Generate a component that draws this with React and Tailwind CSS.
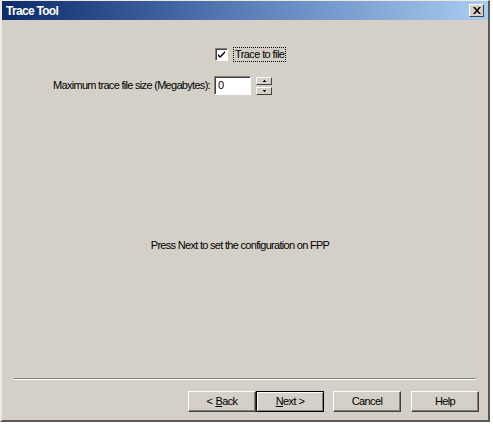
import React from "react";

const font = { fontFamily: '"Liberation Sans", Arial, sans-serif' };

const DlgButton = ({ children, isDefault = false, className = "" }) => (
  <button
    className={
      "h-[21px] w-[68px] bg-[#d4d0c8] text-[11px] text-black flex items-center justify-center " +
      (isDefault
        ? "border border-black shadow-[inset_1px_1px_0_#fff,inset_-1px_-1px_0_#808080] "
        : "border border-t-white border-l-white border-r-[#404040] border-b-[#404040] shadow-[inset_-1px_-1px_0_#808080] ") +
      className
    }
  >
    {children}
  </button>
);

export default function App() {
  return (
    <div className="w-[493px] h-[428px] bg-white tracking-[-0.6px]" style={font}>
      <div className="w-[490px] h-[422px] bg-[#d4d0c8] flex flex-col border-l-2 border-t border-l-[#ece9e2] border-t-[#ece9e2] border-r-2 border-b-2 border-r-[#5a5a5a] border-b-[#5a5a5a]">
        {/* title bar */}
        <div className="h-[19px] flex items-center justify-between pl-[4px] pr-[4px] bg-gradient-to-r from-[#0c2a6b] via-[#5a7fb8] to-[#a9cdf1]">
          <span className="text-white font-bold text-[12px] tracking-[-0.7px]">Trace Tool</span>
          <div className="w-[15px] h-[13px] bg-[#d4d0c8] border border-t-white border-l-white border-r-[#404040] border-b-[#404040] flex items-center justify-center">
            <svg width="8" height="7" viewBox="0 0 8 7">
              <path d="M0 0h2l2 2.5L6 0h2L5 3.5 8 7H6L4 4.5 2 7H0l3-3.5z" fill="#000" />
            </svg>
          </div>
        </div>

        {/* trace to file */}
        <div className="mt-[27px] flex items-center pl-[213px]">
          <div className="w-[13px] h-[13px] bg-white border border-t-[#808080] border-l-[#808080] border-r-white border-b-white shadow-[inset_1px_1px_0_#404040] flex items-center justify-center">
            <svg width="9" height="9" viewBox="0 0 9 9">
              <path d="M1 4l2 2 5-5v2L3 8 1 6z" fill="#000" />
            </svg>
          </div>
          <span className="ml-[5px] px-[1px] text-[11px] leading-[13px] border border-dotted border-black">
            Trace to file
          </span>
        </div>

        {/* max size */}
        <div className="mt-[14px] flex items-center pl-[51px]">
          <span className="text-[11px] w-[161px] whitespace-nowrap tracking-[-0.7px]">Maximum trace file size (Megabytes):</span>
          <div className="w-[37px] h-[19px] bg-white border border-t-[#808080] border-l-[#808080] border-r-white border-b-white shadow-[inset_1px_1px_0_#404040] text-[11px] pl-[3px] leading-[16px]">
            0
          </div>
          <div className="ml-[5px] flex flex-col gap-[2px]">
            <div className="w-[16px] h-[8px] border border-t-white border-l-white border-r-[#404040] border-b-[#404040] flex items-center justify-center">
              <svg width="3" height="2" viewBox="0 0 3 2"><path d="M1 0h1v1h1v1H0V1h1z" fill="#000" /></svg>
            </div>
            <div className="w-[16px] h-[8px] border border-t-white border-l-white border-r-[#404040] border-b-[#404040] flex items-center justify-center">
              <svg width="3" height="2" viewBox="0 0 3 2"><path d="M0 0h3v1H2v1H1V1H0z" fill="#000" /></svg>
            </div>
          </div>
        </div>

        {/* message */}
        <div className="flex-1 flex items-center justify-center pt-[18px] pr-[10px]">
          <span className="text-[11px] tracking-[-0.7px]">Press Next to set the configuration on FPP</span>
        </div>

        {/* separator */}
        <div className="mx-[12px] h-[2px] border-t border-t-[#808080] border-b border-b-white" />

        {/* buttons */}
        <div className="mt-[11px] mb-[8px] flex justify-end pr-[9px]">
          <DlgButton>
            &lt;<span className="ml-[3px]"><span className="underline">B</span>ack</span>
          </DlgButton>
          <DlgButton isDefault>
            <span className="underline">N</span>ext &gt;
          </DlgButton>
          <DlgButton className="ml-[9px]">Cancel</DlgButton>
          <DlgButton className="ml-[10px]">Help</DlgButton>
        </div>
      </div>
    </div>
  );
}
